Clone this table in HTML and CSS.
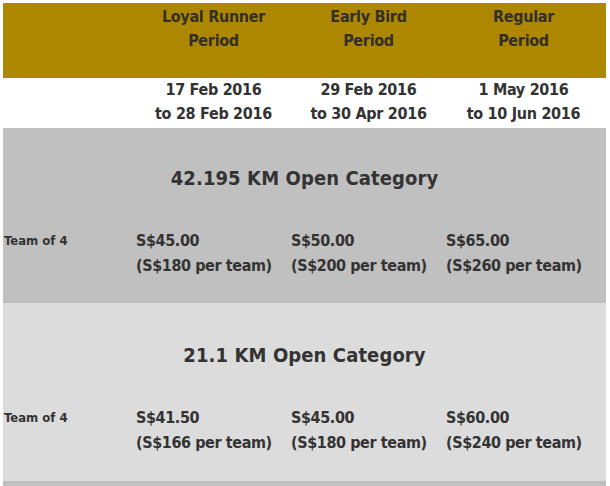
FILE: index.html
```html
<!DOCTYPE html>
<html>
<head>
<meta charset="utf-8">
<link rel="stylesheet" href="styles.css">
</head>
<body>
<div class="table">
  <div class="row head">
    <div></div>
    <div class="c">Loyal Runner<br>Period</div>
    <div class="c">Early Bird<br>Period</div>
    <div class="c">Regular<br>Period</div>
  </div>
  <div class="row dates">
    <div></div>
    <div class="c">17 Feb 2016<br>to 28 Feb 2016</div>
    <div class="c">29 Feb 2016<br>to 30 Apr 2016</div>
    <div class="c">1 May 2016<br>to 10 Jun 2016</div>
  </div>
  <div class="section s1">
    <div class="title">42.195 KM Open Category</div>
    <div class="row prices">
      <div class="label">Team of 4</div>
      <div>S$45.00<br>(S$180 per team)</div>
      <div>S$50.00<br>(S$200 per team)</div>
      <div>S$65.00<br>(S$260 per team)</div>
    </div>
  </div>
  <div class="section s2">
    <div class="title">21.1 KM Open Category</div>
    <div class="row prices">
      <div class="label">Team of 4</div>
      <div>S$41.50<br>(S$166 per team)</div>
      <div>S$45.00<br>(S$180 per team)</div>
      <div>S$60.00<br>(S$240 per team)</div>
    </div>
  </div>
</div>
</body>
</html>
```
FILE: styles.css
```css
html, body {
  margin: 0;
  padding: 0;
  background: #ffffff;
}
.table {
  margin: 3px 0 0 3px;
  width: 603px;
  font-family: "DejaVu Sans Condensed", "DejaVu Sans", sans-serif;
  font-stretch: condensed;
  font-weight: bold;
  font-size: 16px;
  letter-spacing: -0.3px;
  color: #333333;
}
.row {
  display: grid;
  grid-template-columns: 133px 155px 155px 155px;
}
.c {
  text-align: center;
}
.head {
  background: #ae8700;
  height: 75px;
  box-sizing: border-box;
  padding-top: 2px;
  line-height: 24px;
  color: #33302a;
}
.dates {
  height: 50px;
  line-height: 24px;
}
.section {
  box-sizing: border-box;
}
.s1 {
  background: #c0c0c0;
  padding: 38px 0 25px;
  height: 175px;
}
.s2 {
  background: #dcdcdc;
  padding: 40px 0 26px;
  border-bottom: 5px solid #bfbfbf;
  height: 183px;
}
.title {
  text-align: center;
  font-size: 20px;
  letter-spacing: 0.1px;
  line-height: 24px;
  margin-bottom: 38px;
}
.prices {
  line-height: 25px;
  letter-spacing: -0.4px;
}
.label {
  font-size: 13px;
  letter-spacing: 0;
  padding-left: 1px;
}
```
